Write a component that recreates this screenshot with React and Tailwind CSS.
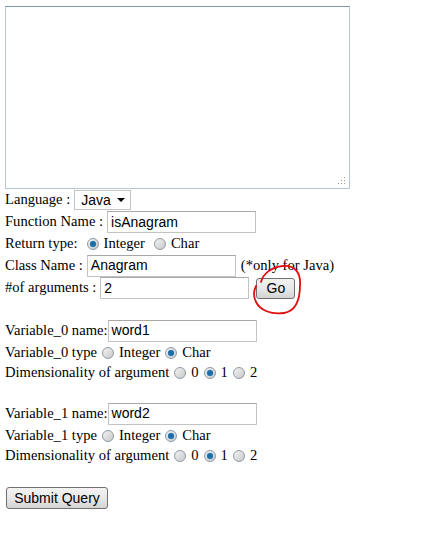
import React from 'react';

const serif = { fontFamily: '"Liberation Serif", "Times New Roman", serif' };

function Radio({ checked }) {
  return (
    <span className="mx-[5px] inline-flex h-[12px] w-[12px] shrink-0 items-center justify-center rounded-full border border-[#8f9aa5] bg-gradient-to-br from-[#f4f4f4] to-[#c8c8c8]">
      {checked && <span className="h-[6px] w-[6px] rounded-full bg-[#1d6ea6] shadow-[0_0_1px_#7fc1ea]" />}
    </span>
  );
}

function TextInput({ value, width = 'w-[149px]' }) {
  return (
    <span
      className={`inline-flex h-[22px] ${width} items-center border border-[#c3c3c3] border-t-[#a8a8a8] bg-white px-[3px] text-[14px] text-black`}
      style={{ fontFamily: '"Liberation Sans", Arial, sans-serif' }}
    >
      {value}
    </span>
  );
}

function Btn({ children, className = '' }) {
  return (
    <span
      className={`inline-flex items-center justify-center rounded-[3px] border border-[#707070] bg-gradient-to-b from-[#f3f3f3] via-[#e8e8e8] to-[#d4d4d4] text-[14px] text-black ${className}`}
      style={{ fontFamily: '"Liberation Sans", Arial, sans-serif' }}
    >
      {children}
    </span>
  );
}

function Row({ children, className = 'h-[22px]' }) {
  return <div className={`flex items-center whitespace-nowrap ${className}`}>{children}</div>;
}

function VariableBlock({ index, name }) {
  return (
    <>
      <Row className="h-[23px]">
        <span>Variable_{index} name:</span>
        <TextInput value={name} />
      </Row>
      <Row className="h-[21px]">
        <span>Variable_{index} type</span>
        <Radio />
        <span>Integer</span>
        <Radio checked />
        <span>Char</span>
      </Row>
      <Row className="h-[20px]">
        <span>Dimensionality of argument</span>
        <Radio />
        <span>0</span>
        <Radio checked />
        <span>1</span>
        <Radio />
        <span>2</span>
      </Row>
    </>
  );
}

export default function App() {
  return (
    <div className="relative min-h-[538px] w-[431px] bg-white pl-[5px] pt-[6px] text-[14.6px] text-black" style={serif}>
      {/* code area */}
      <div className="relative h-[183px] w-[345px] border border-[#b9c6d0] border-t-[#7f97a8] bg-white">
        <svg className="absolute bottom-[3px] right-[3px]" width="8" height="8" viewBox="0 0 8 8">
          <g fill="#a0a0a0">
            <rect x="6" y="0" width="1" height="1" />
            <rect x="3" y="3" width="1" height="1" />
            <rect x="6" y="3" width="1" height="1" />
            <rect x="0" y="6" width="1" height="1" />
            <rect x="3" y="6" width="1" height="1" />
            <rect x="6" y="6" width="1" height="1" />
          </g>
        </svg>
      </div>

      <Row className="h-[22px]">
        <span>Language :</span>
        <span
          className="ml-[4px] inline-flex h-[20px] w-[57px] items-center justify-between border border-[#c3c3c3] bg-white pl-[6px] pr-[5px] text-[14px]"
          style={{ fontFamily: '"Liberation Sans", Arial, sans-serif' }}
        >
          Java
          <svg width="8" height="4" viewBox="0 0 8 4">
            <path d="M0 0h8L4 4z" fill="#000" />
          </svg>
        </span>
      </Row>
      <Row className="h-[22px]">
        <span className="mr-[4px]">Function Name :</span>
        <TextInput value="isAnagram" />
      </Row>
      <Row className="h-[21px]">
        <span>Return type:</span>
        <span className="w-[4px]" />
        <Radio checked />
        <span>Integer</span>
        <span className="w-[4px]" />
        <Radio />
        <span>Char</span>
      </Row>
      <Row className="h-[23px]">
        <span className="mr-[4px]">Class Name :</span>
        <TextInput value="Anagram" />
        <span className="ml-[5px]">(*only for Java)</span>
      </Row>
      <Row className="h-[22px]">
        <span className="mr-[4px]">#of arguments :</span>
        <TextInput value="2" />
        <Btn className="ml-[7px] h-[21px] w-[39px]">Go</Btn>
      </Row>

      <div className="h-[20px]" />
      <VariableBlock index={0} name="word1" />
      <div className="h-[19px]" />
      <VariableBlock index={1} name="word2" />
      <div className="h-[21px]" />

      <Row className="h-[22px]">
        <Btn className="ml-[1px] h-[22px] w-[102px]">Submit Query</Btn>
      </Row>

      {/* hand-drawn red mark around Go */}
      <svg className="pointer-events-none absolute left-[244px] top-[260px]" width="62" height="60" viewBox="0 0 62 60">
        <path
          d="M17 22 C19 14 27 7 39 6 C51 5 57 13 56 25 C56 39 52 51 40 53 C27 55 16 50 12 42 C9 36 10 30 12 26"
          fill="none"
          stroke="#e01010"
          strokeWidth="1.8"
          strokeLinecap="round"
        />
      </svg>
    </div>
  );
}
